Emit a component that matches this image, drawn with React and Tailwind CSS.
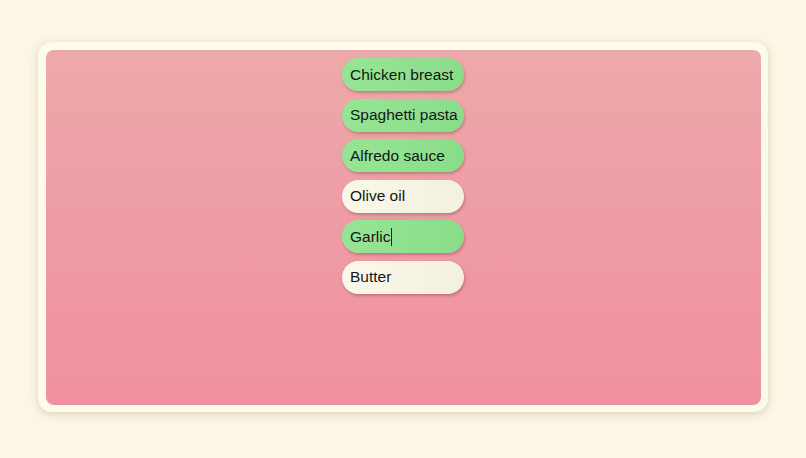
import React from "react";

const items = [
  { label: "Chicken breast", on: true },
  { label: "Spaghetti pasta", on: true },
  { label: "Alfredo sauce", on: true },
  { label: "Olive oil", on: false },
  { label: "Garlic", on: true, caret: true },
  { label: "Butter", on: false },
];

export default function App() {
  return (
    <div className="w-full h-[458px] bg-[#fdf6e5] pt-[42px] px-[38px]" style={{ fontFamily: '"Liberation Sans", Arial, sans-serif' }}>
      <div className="h-[370px] rounded-[14px] bg-[#fdfbea] pt-[8px] pb-[7px] pl-[8px] pr-[7px] shadow-[0_2px_8px_rgba(120,100,60,0.25)]">
        <div className="h-full rounded-[8px] bg-gradient-to-b from-[#eda9a9] to-[#ef8fa0] flex flex-col items-center pt-[8px] pr-[1px] gap-[7.5px]">
          {items.map((it) => (
            <div
              key={it.label}
              className={
                "w-[122px] h-[33px] shrink-0 rounded-[17px] pl-[8px] flex items-center text-[15.5px] text-[#161616] shadow-[1px_2px_3px_rgba(90,40,40,0.3)] " +
                (it.on
                  ? "bg-gradient-to-r from-[#96e596] to-[#89dd89]"
                  : "bg-gradient-to-r from-[#f9f8ea] to-[#f2f1df]")
              }
            >
              <span>{it.label}</span>
              {it.caret && <span className="inline-block w-[1px] h-[18px] bg-[#222] ml-[1px]" />}
            </div>
          ))}
        </div>
      </div>
    </div>
  );
}
